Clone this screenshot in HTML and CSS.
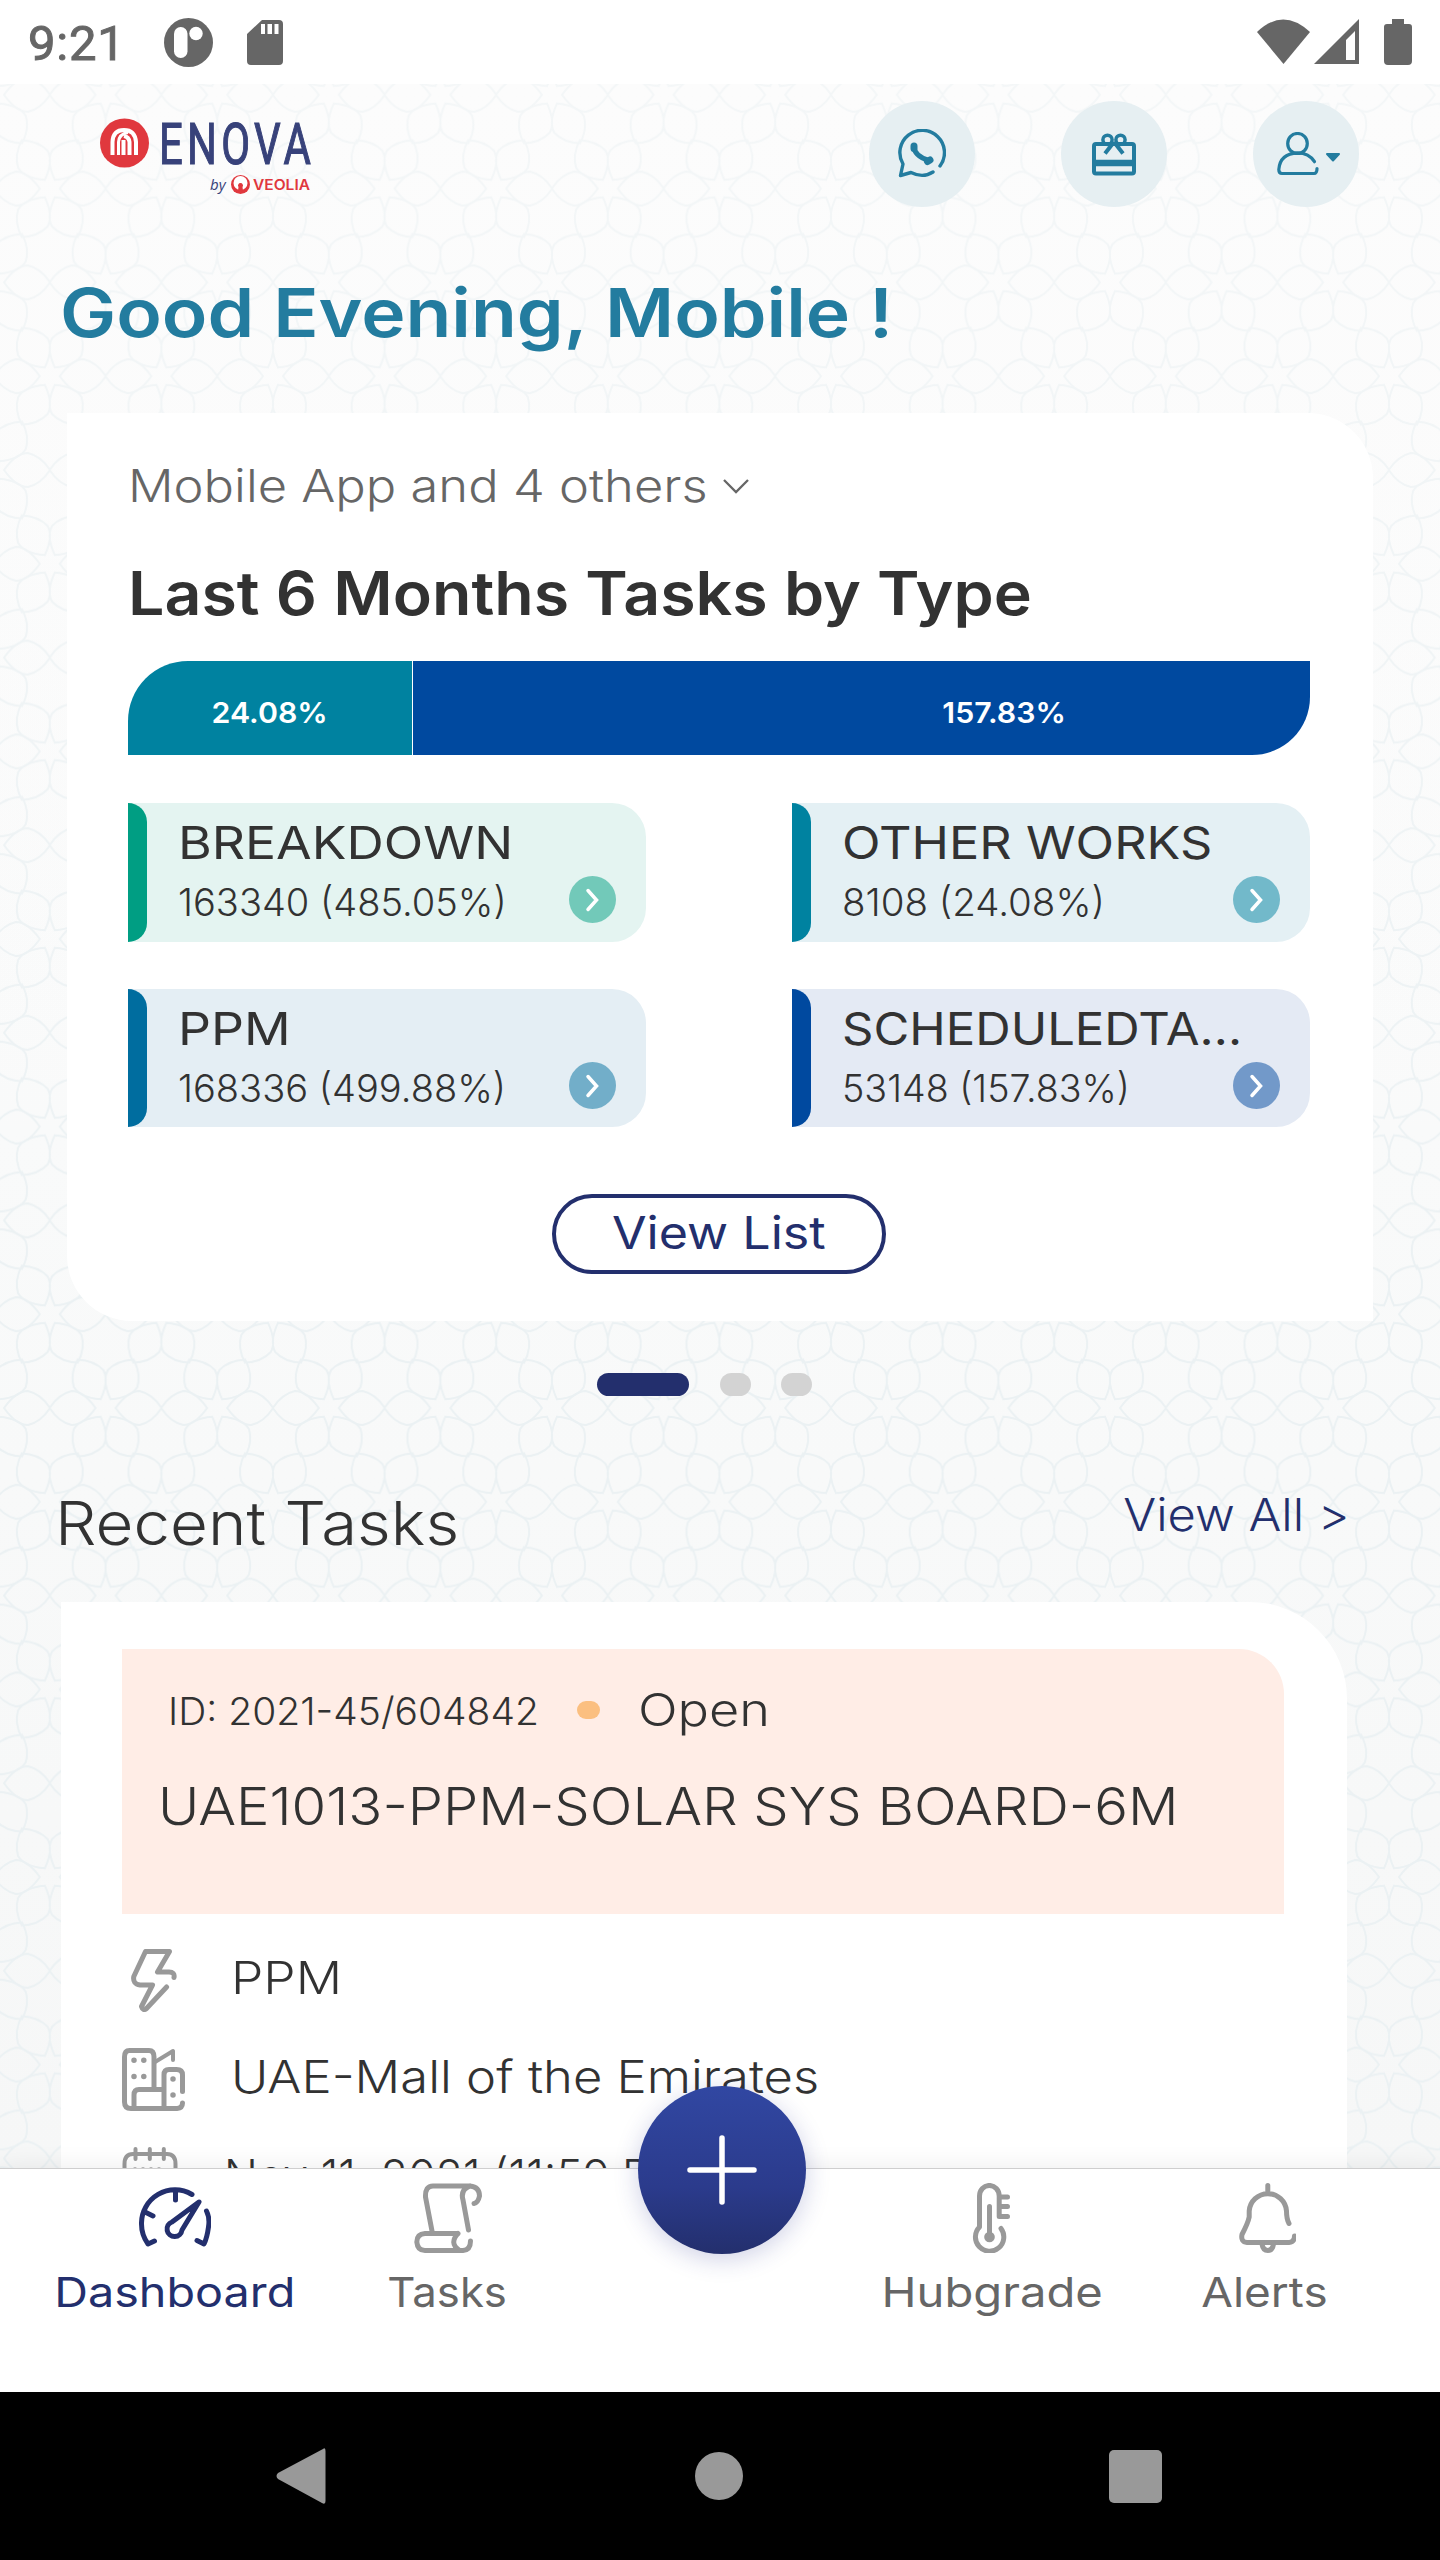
FILE: index.html
```
<!DOCTYPE html>
<html lang="en">
<head>
  <meta charset="UTF-8" />
  <meta name="viewport" content="width=device-width, initial-scale=1" />
  <title>Enova - Dashboard</title>
  <link rel="stylesheet" href="styles.css">
</head>
<body>
  <div class="status-bar">
    <span class="status-time">9:21</span>
    <svg class="status-app" width="49" height="49" viewBox="0 0 49 49">
      <circle cx="24.5" cy="24.5" r="24.5" fill="#666"/>
      <rect x="10" y="9" width="13.5" height="31" rx="6.7" fill="#fff"/>
      <circle cx="32" cy="15.5" r="6.7" fill="#fff"/>
    </svg>
    <svg class="status-sd" width="36" height="45" viewBox="0 0 36 45">
      <path fill="#666" fill-rule="evenodd" d="M15 0H32Q36 0 36 4V41Q36 45 32 45H4Q0 45 0 41V14ZM14 4V14H18V4ZM20.5 4V14H25V4ZM27.5 4V14H31.5V4Z"/>
    </svg>
    <svg class="status-signal" width="156" height="46" viewBox="0 0 156 46">
      <path fill="#666" d="M0 13Q26 -12 53 13L26.5 45Z"/>
      <path fill="#666" fill-rule="evenodd" d="M102 0V45H57ZM98 12L89 21V41H98Z"/>
      <path fill="#666" d="M135 0H147V5H152Q155 5 155 8V42Q155 46 151 46H131Q127 46 127 42V8Q127 5 130 5H135Z"/>
    </svg>
  </div>

  <main class="screen">
    <!-- star lattice behind the content -->
    <svg class="lattice" width="1440" height="2084">
      <defs>
        <g id="star" fill="none" stroke="#ebf1f3" stroke-width="2">
          <path id="petal" d="M10 0Q22 -17 34 -17Q47 -14 56 0Q47 14 34 17Q22 17 10 0Z"/>
          <use href="#petal" transform="rotate(60)"/>
          <use href="#petal" transform="rotate(120)"/>
          <use href="#petal" transform="rotate(180)"/>
          <use href="#petal" transform="rotate(240)"/>
          <use href="#petal" transform="rotate(300)"/>
        </g>
        <pattern id="stars" x="105.6" y="10.8" width="111.6" height="187.6" patternUnits="userSpaceOnUse">
          <use href="#star" x="0" y="0"/>
          <use href="#star" x="111.6" y="0"/>
          <use href="#star" x="0" y="187.6"/>
          <use href="#star" x="111.6" y="187.6"/>
          <use href="#star" x="55.8" y="93.8"/>
        </pattern>
        <linearGradient id="fade" x1="0" y1="0" x2="0" y2="1">
          <stop offset="0" stop-color="#fcfcfc" stop-opacity="0.5"/>
          <stop offset="0.6" stop-color="#fcfcfc" stop-opacity="0"/>
        </linearGradient>
      </defs>
      <rect width="1440" height="2084" fill="url(#stars)"/>
      <rect width="1440" height="2084" fill="url(#fade)"/>
    </svg>

    <header class="top-bar">
      <svg class="logo" width="230" height="84" viewBox="0 0 230 84">
        <circle cx="24.5" cy="28" r="24.5" fill="#e0383e"/>
        <g fill="none" stroke="#fff" stroke-width="4">
          <path d="M12.500 40V27Q13 15 24 15Q35 15 36 27V40"/>
          <path d="M18.500 40V27Q19 19 28 17.500" stroke-width="3"/>
          <path d="M23.500 40V25M29.500 40V27Q29 22 24 21"/>
        </g>
        <text class="logo-name" x="59" y="49" textLength="156" lengthAdjust="spacingAndGlyphs">ENOVA</text>
        <text class="logo-by" x="110" y="74.5">by</text>
        <circle cx="140.5" cy="69.5" r="9.5" fill="#e0383e"/>
        <circle cx="140.5" cy="68" r="7" fill="#fff"/>
        <path d="M140.5 68A2.500 2.500 0 0 1 142.500 72L143 76H138L138.500 72A2.500 2.500 0 0 1 140.500 68Z" fill="#e0383e"/>
        <text class="logo-veolia" x="153" y="74.5" textLength="57" lengthAdjust="spacingAndGlyphs">VEOLIA</text>
      </svg>
      <div class="top-actions">
        <button class="round-btn">
          <svg width="48" height="50" viewBox="0 0 48 50" fill="none" stroke="#237c9f" stroke-width="3.4" stroke-linecap="round" stroke-linejoin="round">
            <path d="M42 37A22.300 22.300 0 1 0 5 35L2.500 46.500L13 43.500Q25 49.500 35 43"/>
            <path d="M16 17Q16 27 31 31.500" stroke-width="5"/>
            <path d="M16 17V19.500M29.500 32.500L32 31" stroke-width="7"/>
          </svg>
        </button>
        <button class="round-btn">
          <svg width="44" height="43" viewBox="0 0 44 43" fill="none" stroke="#237c9f" stroke-width="4">
            <rect x="2" y="11" width="40" height="29.5" rx="2"/>
            <path d="M2 30H42" stroke-width="6.5"/>
            <circle cx="15.5" cy="6.8" r="4.6" stroke-width="3.5"/>
            <circle cx="28.5" cy="6.8" r="4.6" stroke-width="3.5"/>
            <path d="M22 9L13 20.500M22 9L31 20.500"/>
          </svg>
        </button>
        <button class="round-btn user-btn">
          <svg width="64" height="44" viewBox="0 0 64 44" fill="none" stroke="#237c9f" stroke-width="3.2" stroke-linecap="round">
            <ellipse cx="20.5" cy="11.5" rx="9.8" ry="10"/>
            <path d="M37.500 29.700Q32 20.800 20.500 20.800Q3 21.500 1.800 37.500Q1.800 41.500 5 41.500H37Q40 41.500 40 36.500"/>
            <path d="M50 22H62L56 28.500Z" fill="#237c9f" stroke-width="2" stroke-linejoin="round"/>
          </svg>
        </button>
      </div>
    </header>

    <h1 class="greeting">Good Evening, Mobile !</h1>

    <section class="card summary">
      <div class="site-select">
        <span class="site-name">Mobile App and 4 others</span>
        <svg width="28" height="16" viewBox="0 0 28 16" fill="none" stroke="#666" stroke-width="2.3"><path d="M2 2L14 14L26 2"/></svg>
      </div>
      <h2 class="summary-title">Last 6 Months Tasks by Type</h2>
      <div class="type-bar">
        <div class="bar-part bar-other"><span>24.08%</span></div>
        <div class="bar-part bar-scheduled"><span>157.83%</span></div>
      </div>
      <div class="tiles">
        <div class="tile breakdown">
          <div class="tile-name">BREAKDOWN</div>
          <div class="tile-count">163340 (485.05%)</div>
          <svg class="tile-go" width="47" height="47" viewBox="0 0 47 47"><circle cx="23.5" cy="23.5" r="23.5"/><path d="M19 14.500L27.500 24L19 33.500"/></svg>
        </div>
        <div class="tile other">
          <div class="tile-name">OTHER WORKS</div>
          <div class="tile-count">8108 (24.08%)</div>
          <svg class="tile-go" width="47" height="47" viewBox="0 0 47 47"><circle cx="23.5" cy="23.5" r="23.5"/><path d="M19 14.500L27.500 24L19 33.500"/></svg>
        </div>
        <div class="tile ppm">
          <div class="tile-name">PPM</div>
          <div class="tile-count">168336 (499.88%)</div>
          <svg class="tile-go" width="47" height="47" viewBox="0 0 47 47"><circle cx="23.5" cy="23.5" r="23.5"/><path d="M19 14.500L27.500 24L19 33.500"/></svg>
        </div>
        <div class="tile scheduled">
          <div class="tile-name">SCHEDULEDTA...</div>
          <div class="tile-count">53148 (157.83%)</div>
          <svg class="tile-go" width="47" height="47" viewBox="0 0 47 47"><circle cx="23.5" cy="23.5" r="23.5"/><path d="M19 14.500L27.500 24L19 33.500"/></svg>
        </div>
      </div>
      <button class="view-list"><span>View List</span></button>
    </section>

    <div class="dots">
      <span class="dot active"></span>
      <span class="dot"></span>
      <span class="dot"></span>
    </div>

    <div class="recent-head">
      <h2 class="recent-title">Recent Tasks</h2>
      <a class="view-all">View All &gt;</a>
    </div>

    <section class="card task">
      <div class="task-head">
        <div class="task-meta">
          <span class="task-id">ID: 2021-45/604842</span>
          <span class="task-dot"></span>
          <span class="task-state">Open</span>
        </div>
        <div class="task-name">UAE1013-PPM-SOLAR SYS BOARD-6M</div>
      </div>
      <div class="task-row">
        <svg width="63" height="63" viewBox="-9 0 63 63">
          <path d="M35.600 38L15.500 59.500Q12 62.500 10.500 57.500L21.500 36H9Q1.500 35 2.800 27.500L14.500 2.500H38.500L26.500 23H38Q44 23 43 28.500"/>
        </svg>
        <span class="task-type">PPM</span>
      </div>
      <div class="task-row">
        <svg width="63" height="63" viewBox="0 0 63 63">
          <path d="M32 41V9Q32 2.500 27 2.500H7.500Q2.500 2.500 2.500 9V54Q2.500 60.500 9 60.500H55Q60.500 60 60.500 55"/>
          <path d="M12 60V47Q12 41.500 17 41.500H42M42 60V27Q42 21.500 47 21.500H54.500Q60.500 21.500 60.500 27V43.500"/>
          <path d="M33 14L51 3V12" stroke-width="4"/>
          <path d="M12 12.200V12.300M21.800 12.200V12.300M12 28.400V28.500M21.800 28.400V28.500M51 31V31.100M51 47V47.100" stroke-width="5.5"/>
        </svg>
        <span class="task-site">UAE-Mall of the Emirates</span>
      </div>
      <div class="task-row">
        <svg width="63" height="63" viewBox="0 0 63 63">
          <path d="M2.500 30V17Q2.500 7 11 7H45Q53.500 7 53.500 17V30M13.500 2V12M27.800 2V12M41.800 2V12" stroke-width="4"/>
          <path d="M13 22.500V22.600M21 22.500V22.600M29 22.500V22.600M37 22.500V22.600" stroke-width="4.5"/>
        </svg>
        <span class="task-date">Nov 11, 2021 (11:59 PM)</span>
      </div>
    </section>
  </main>

  <nav class="tabs">
    <a class="tab active">
      <svg width="72" height="70" viewBox="0 -5 72 70">
        <path d="M15.500 53L9 56Q2.500 47 2.500 36A33.500 33.500 0 0 1 53 6.500M67.500 23Q71 30 69.500 39Q68 50 65 56L58 52.500M36.500 3.500V12M6 24L14 28"/>
        <path d="M60 14L33 34A7.500 7.500 0 1 0 43 42Z"/>
      </svg>
      <span class="lbl-dashboard">Dashboard</span>
    </a>
    <a class="tab">
      <svg width="68" height="70" viewBox="0 0 68 70">
        <path d="M18 48L11.500 14Q11 3 19 3H56Q65.500 4 65.500 13Q64 20 60 20.500M56 3Q46 7 49 17L54.500 47"/>
        <path d="M44 50.500H11Q2.800 51 2.800 59Q3.500 67.500 11 67.500H49Q56.500 67 56.500 58M44 50.500Q35 60 45 67"/>
      </svg>
      <span class="lbl-tasks">Tasks</span>
    </a>
    <div class="tab">
      <button class="add-btn">
        <svg width="70" height="70" viewBox="0 0 70 70"><path d="M35 3V67M3 35H67"/></svg>
      </button>
    </div>
    <a class="tab">
      <svg width="42" height="70" viewBox="-2 0 42 70">
        <path d="M28 45.500A14.200 14.200 0 1 1 6.500 44V13A9.800 10.500 0 0 1 26.200 13V33.500H34.500M26.500 14H34.500M26.500 23.500H34.500"/>
        <path d="M16.500 23.500V54"/>
        <circle cx="16.5" cy="54" r="5.3" fill="#999" stroke="none"/>
      </svg>
      <span class="lbl-hubgrade">Hubgrade</span>
    </a>
    <a class="tab">
      <svg width="62" height="70" viewBox="-5 0 62 70">
        <path d="M50 40.500Q47.500 36 47.500 28A18.700 18.700 0 0 0 10.200 28V34Q9 40 3 51.500Q1.500 59 8 59.500H50Q55.500 59 55.500 53M28.800 2.500V8"/>
        <path d="M23 61Q24 67.500 28.800 67.500Q33.500 67.500 34.500 61"/>
      </svg>
      <span class="lbl-alerts">Alerts</span>
    </a>
  </nav>

  <div class="system-nav">
    <svg width="50" height="58" viewBox="0 0 50 58"><path d="M47 2Q49.500 0 49.500 4V54Q49.500 58 46 56L2 32Q-1 29 2 26Z"/></svg>
    <svg width="50" height="50" viewBox="0 0 50 50"><circle cx="26" cy="25" r="24"/></svg>
    <svg width="53" height="53" viewBox="0 0 53 53"><rect width="53" height="53" rx="5"/></svg>
  </div>
</body>
</html>
```
FILE: styles.css
```
* {
  box-sizing: border-box;
}
body {
  margin: 0;
  width: 1440px;
  height: 2560px;
  overflow: hidden;
  display: flex;
  flex-direction: column;
  background: #fff;
  color: #323232;
  font-family: Inter, "Open Sans", sans-serif;
}
h1, h2 {
  margin: 0;
}
button {
  padding: 0;
  border: none;
  font-family: inherit;
}
svg {
  display: block;
  flex-shrink: 0;
}

/* Android status bar */
.status-bar {
  height: 84px;
  display: flex;
  align-items: flex-start;
  padding: 18px 101px 0 28px;
}
.status-time {
  width: 136px;
  margin-top: -3px;
  font-family: Roboto, sans-serif;
  font-size: 49px;
  font-weight: 400;
  line-height: 58px;
  letter-spacing: 0.8px;
  color: #666;
  -webkit-text-stroke: 1px #666;
}
.status-sd {
  margin: 2px 0 0 34px;
}
.status-signal {
  margin: 1px -74px 0 auto;
}

/* Scrolled content */
.screen {
  position: relative;
  z-index: 0;
  height: 2084px;
  overflow: hidden;
  background: linear-gradient(#fcfcfc, #f9fafa 50%, #f6f7f7);
}
.lattice {
  position: absolute;
  top: 0;
  left: 0;
  z-index: -1;
}
.top-bar {
  display: flex;
  justify-content: space-between;
  align-items: flex-start;
  padding: 17px 81px 0 100px;
}
.logo {
  margin-top: 14px;
  overflow: visible;
}
.logo-name {
  font-family: Roboto, sans-serif;
  font-size: 58px;
  letter-spacing: 6px;
  fill: #38427a;
  stroke: #38427a;
  stroke-width: 1.2;
}
.logo-by {
  font-family: "Open Sans", sans-serif;
  font-size: 15px;
  font-style: italic;
  fill: #38427a;
}
.logo-veolia {
  font-size: 14px;
  font-weight: 600;
  fill: #e0383e;
}
.top-actions {
  display: flex;
  gap: 86px;
}
.round-btn {
  display: flex;
  align-items: center;
  justify-content: center;
  width: 106px;
  height: 106px;
  border-radius: 50%;
  background: #e6eff2;
}
.user-btn svg {
  margin-left: 6px;
}
.greeting {
  margin: 66px 0 0 60px;
  font-size: 67px;
  font-weight: 600;
  line-height: 80px;
  color: #237c9f;
  transform: scaleX(1.119);
  transform-origin: left;
}
.card {
  background: #fff;
}

/* Tasks by type */
.summary {
  width: 1306px;
  height: 908px;
  margin: 60px 0 0 67px;
  padding: 45px 63px 0 61px;
  border-radius: 0 65px 0 65px;
}
.site-select {
  display: flex;
  align-items: center;
  font-size: 45px;
  font-weight: 300;
  line-height: 56px;
  color: #666;
}
.site-name {
  width: 594px;
  white-space: nowrap;
  transform: scaleX(1.125);
  transform-origin: left;
}
.summary-title {
  margin-top: 43px;
  font-size: 60px;
  font-weight: 600;
  line-height: 72px;
  white-space: nowrap;
  transform: scaleX(1.074);
  transform-origin: left;
}
.type-bar {
  display: flex;
  gap: 1px;
  height: 94px;
  margin-top: 32px;
  border-radius: 60px 0 58px 0;
  overflow: hidden;
}
.bar-part {
  display: flex;
  align-items: center;
  justify-content: center;
  padding-top: 8px;
  font-size: 29px;
  font-weight: 600;
  color: #fff;
}
.bar-part span {
  transform: scaleX(1.045);
}
.bar-other {
  width: 284px;
  background: #0082a0;
}
.bar-scheduled {
  flex: 1;
  padding-left: 285px;
  background: #00499f;
}
.tiles {
  display: grid;
  grid-template-columns: 518px 518px;
  grid-template-rows: 139px 138px;
  gap: 47px 146px;
  margin-top: 48px;
}
.tile {
  position: relative;
  padding: 12px 0 0 50px;
  border-radius: 0 34px 34px 0;
  white-space: nowrap;
}
.tile::before {
  content: "";
  position: absolute;
  left: 0;
  top: 0;
  width: 19px;
  height: 100%;
  border-radius: 0 19px 19px 0;
  background: currentColor;
}
.tile-name {
  width: 400px;
  font-size: 45px;
  line-height: 56px;
  color: #323232;
  transform: scaleX(1.148);
  transform-origin: left;
}
.tile-count {
  width: 400px;
  margin-top: 8px;
  font-size: 38.5px;
  font-weight: 300;
  line-height: 46px;
  color: #323232;
  transform: scaleX(0.988);
  transform-origin: left;
}
.tile-go {
  position: absolute;
  right: 30px;
  top: 73px;
}
.tile-go path {
  fill: none;
  stroke: #fff;
  stroke-width: 3.5;
  stroke-linecap: round;
}
.breakdown {
  color: #009e83;
  background: #e4f4f1;
}
.breakdown .tile-go {
  fill: #72c9b9;
}
.other {
  color: #0082a0;
  background: #e4f0f4;
}
.other .tile-go {
  fill: #72b9ca;
}
.other .tile-name {
  transform: scaleX(1.12);
}
.other .tile-count {
  transform: none;
}
.ppm {
  color: #006d9f;
  background: #e4eef4;
}
.ppm .tile-go {
  fill: #72aec9;
}
.scheduled {
  color: #00499f;
  background: #e4eaf4;
}
.scheduled .tile-go {
  fill: #7299c9;
}
.scheduled .tile-name {
  transform: scaleX(1.09);
}
.scheduled .tile-count {
  transform: scaleX(0.978);
}
.view-list {
  display: block;
  width: 334px;
  height: 80px;
  margin: 67px 0 0 424px;
  padding-bottom: 2px;
  border: 4px solid #232f6d;
  border-radius: 40px;
  background: #fff;
  font-size: 45px;
  line-height: 70px;
  color: #232f6d;
}
.view-list span {
  display: inline-block;
  transform: scaleX(1.115);
}

/* Carousel dots */
.dots {
  display: flex;
  gap: 30.5px;
  margin: 52px 0 0 597px;
}
.dot {
  width: 31px;
  height: 23px;
  border-radius: 12px;
  background: #d3d3d3;
}
.dot.active {
  width: 92px;
  background: #232f6d;
}

/* Recent tasks */
.recent-head {
  display: flex;
  justify-content: space-between;
  align-items: flex-start;
  margin-top: 91px;
  padding: 0 90px 0 55px;
}
.recent-title {
  font-size: 60px;
  font-weight: 300;
  line-height: 72px;
  transform: scaleX(1.09);
  transform-origin: left;
}
.view-all {
  font-size: 45px;
  font-weight: 300;
  line-height: 56px;
  color: #232f6d;
  transform: scaleX(1.085);
  transform-origin: right;
}
.task {
  width: 1286px;
  height: 700px;
  margin: 43px 0 0 61px;
  padding: 47px 63px 0 61px;
  border-radius: 0 97px 0 0;
}
.task-head {
  height: 265px;
  padding: 31px 0 0 36px;
  margin-bottom: 35px;
  border-radius: 0 45px 0 0;
  background: #ffede6;
}
.task-meta {
  display: flex;
  align-items: center;
  padding-left: 10px;
  line-height: 56px;
}
.task-id {
  width: 409px;
  padding-top: 3px;
  font-size: 38.5px;
  font-weight: 300;
  transform: scaleX(1.013);
  transform-origin: left;
}
.task-dot {
  width: 23px;
  height: 18px;
  margin-right: 38px;
  border-radius: 9px;
  background: #fbbf80;
}
.task-state {
  font-size: 45px;
  font-weight: 300;
  transform: scaleX(1.16);
  transform-origin: left;
}
.task-name {
  width: 1000px;
  margin-top: 36px;
  font-size: 52px;
  font-weight: 300;
  line-height: 64px;
  white-space: nowrap;
  transform: scaleX(1.08);
  transform-origin: left;
}
.task-row {
  display: flex;
  align-items: flex-start;
  gap: 46px;
  height: 63px;
  margin-bottom: 36px;
  font-size: 45px;
  font-weight: 300;
  line-height: 57px;
}
.task-row svg {
  fill: none;
  stroke: #999;
  stroke-width: 5;
  stroke-linecap: round;
  stroke-linejoin: round;
}
.task-row span {
  transform-origin: left;
}
.task-type {
  transform: scaleX(1.145);
}
.task-site {
  transform: scaleX(1.127);
}
.task-date {
  margin-left: -7px;
  transform: scaleX(0.99);
}

/* Bottom tabs */
.tabs {
  position: relative;
  z-index: 1;
  display: flex;
  height: 224px;
  padding: 14px 39px 0;
  border-top: 1px solid #cfcfcf;
  background: #fff;
  box-shadow: 0 0 24px rgba(0, 0, 0, 0.08);
}
.tab {
  flex: 1;
  display: flex;
  flex-direction: column;
  align-items: center;
  gap: 14px;
  font-size: 41px;
  line-height: 50px;
  color: #666;
}
.tab > svg {
  fill: none;
  stroke: #999;
  stroke-width: 5;
  stroke-linecap: round;
  stroke-linejoin: round;
}
.tab.active {
  color: #232f6d;
}
.tab.active > svg {
  stroke: #232f6d;
}
.lbl-dashboard {
  transform: scaleX(1.14);
}
.lbl-tasks {
  transform: scaleX(1.065);
}
.lbl-hubgrade {
  transform: scaleX(1.15);
}
.lbl-alerts {
  transform: scaleX(1.12);
}
.add-btn {
  position: absolute;
  top: -83px;
  left: 638px;
  display: flex;
  align-items: center;
  justify-content: center;
  width: 168px;
  height: 168px;
  border-radius: 50%;
  background: linear-gradient(#3147a2, #2b3b8c 60%, #232f6d);
  box-shadow: 0 5px 24px rgba(35, 47, 140, 0.22);
}
.add-btn path {
  stroke: #fff;
  stroke-width: 5.5;
  stroke-linecap: round;
}

/* Android buttons */
.system-nav {
  display: flex;
  align-items: center;
  justify-content: space-between;
  height: 168px;
  padding: 0 278px 0 276px;
  background: #000;
  fill: #999;
}
```
